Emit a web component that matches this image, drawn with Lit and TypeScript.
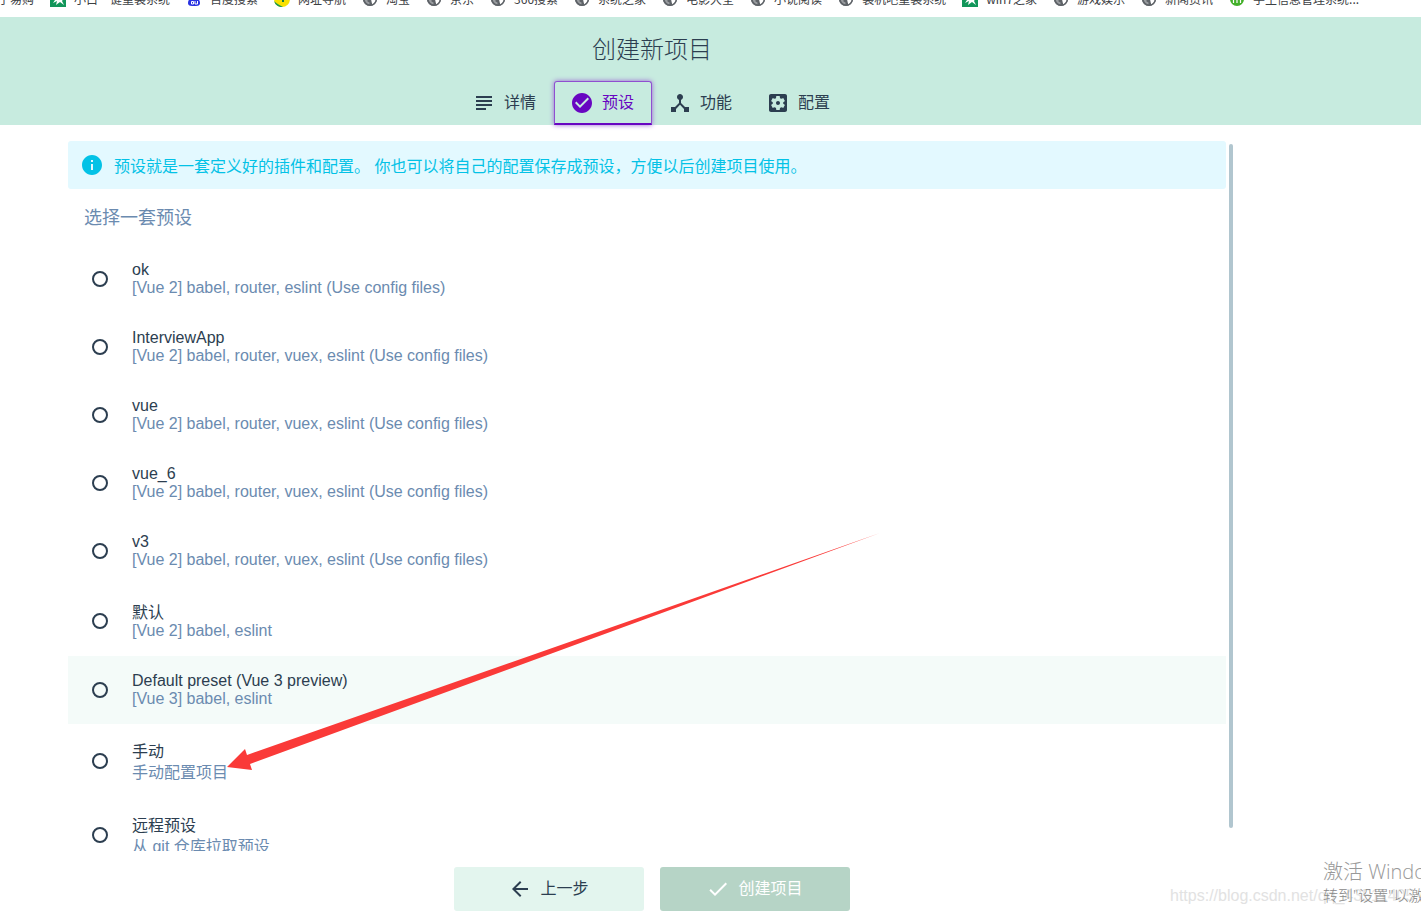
import { LitElement, html, css, svg } from "lit";
import { customElement, state } from "lit/decorators.js";

type Glyph = "win" | "paw" | "nav" | "globe" | "school" | "none";

const bookmarks: { label: string; glyph: Glyph }[] = [
  { label: "苏宁易购", glyph: "none" },
  { label: "小白一键重装系统", glyph: "win" },
  { label: "百度搜索", glyph: "paw" },
  { label: "网址导航", glyph: "nav" },
  { label: "淘宝", glyph: "globe" },
  { label: "京东", glyph: "globe" },
  { label: "360搜索", glyph: "globe" },
  { label: "系统之家", glyph: "globe" },
  { label: "电影大全", glyph: "globe" },
  { label: "小说阅读", glyph: "globe" },
  { label: "装机吧重装系统", glyph: "globe" },
  { label: "win7之家", glyph: "win" },
  { label: "游戏娱乐", glyph: "globe" },
  { label: "新闻资讯", glyph: "globe" },
  { label: "学生信息管理系统...", glyph: "school" },
];

const bookmarkGlyphs = {
  none: svg``,
  win: svg`<rect width="16" height="16" fill="#12965a"/><path d="M3 7h11l-2 3 2 4-4-3-4 3 1-4-4 2 2-3z" fill="#fff"/>`,
  paw: svg`<path d="M8 5c3 0 6 4 6 7s-3 3-6 3-6 0-6-3 3-7 6-7z" fill="#2932e1"/><path d="M5.500 10.500h2v2.500h-2zM9 10v3h2.500v-3" fill="none" stroke="#fff"/>`,
  nav: svg`<circle cx="8" cy="8" r="8" fill="#f8e000"/><path d="M0 10a8 8 0 0 0 9 6c-3-2-6-3-9-6z" fill="#1d9a4a"/><path d="M9 6v5" stroke="#187a3c" stroke-width="2"/>`,
  globe: svg`<circle cx="8" cy="8" r="7" fill="#5f6368"/><path d="M8 3h3c2 1 3 3 3 5 0 3-2 5-4 5.500V12c-1-1 0-2-1-3L7 8c1-1 3-1 2-3z" fill="#fff"/><path d="M2.500 7l3 2v1.500l2 1v2C5 13 2.500 11 2.500 7z" fill="#9a9da0"/><circle cx="8" cy="8" r="6.300" fill="none" stroke="#5f6368" stroke-width="1.400"/>`,
  school: svg`<circle cx="8" cy="8" r="7" fill="#43b02a"/><path d="M4.500 12V7h7v5M8 7v5" fill="none" stroke="#fff" stroke-width="1.200"/>`,
};

const icons = {
  subject: "M4 5h16v2H4zM4 9h16v2H4zM4 13h16v2H4zM4 17h10v2H4z",
  check_circle:
    "M12 2C6.480 2 2 6.480 2 12s4.480 10 10 10 10-4.480 10-10S17.520 2 12 2zm-2 15l-5-5 1.410-1.410L10 14.170l7.590-7.590L19 8l-9 9z",
  hub: "M17 16l-4-4V8.820C14.160 8.400 15 7.300 15 6c0-1.660-1.340-3-3-3S9 4.340 9 6c0 1.300.84 2.400 2 2.820V12l-4 4H3v5h5v-3.050l4-4.200 4 4.200V21h5v-5h-4z",
  settings:
    "M12 10c-1.100 0-2 .9-2 2s.9 2 2 2 2-.9 2-2-.9-2-2-2zm7-7H5c-1.110 0-2 .9-2 2v14c0 1.100.89 2 2 2h14c1.110 0 2-.9 2-2V5c0-1.100-.89-2-2-2zm-1.750 9c0 .23-.02.46-.05.68l1.480 1.160c.13.11.17.3.08.45l-1.400 2.420c-.09.15-.27.21-.43.15l-1.740-.7c-.36.28-.76.51-1.180.69l-.26 1.850c-.03.17-.18.3-.35.3h-2.800c-.17 0-.32-.13-.35-.29l-.26-1.850c-.43-.18-.82-.41-1.180-.69l-1.740.7c-.16.06-.34 0-.43-.15l-1.400-2.420c-.09-.15-.05-.34.08-.45l1.480-1.160c-.03-.23-.05-.46-.05-.69 0-.23.02-.46.05-.68l-1.480-1.160c-.13-.11-.17-.3-.08-.45l1.400-2.420c.09-.15.27-.21.43-.15l1.740.7c.36-.28.76-.51 1.180-.69l.26-1.850c.03-.17.18-.3.35-.3h2.800c.17 0 .32.13.35.29l.26 1.850c.43.18.82.41 1.180.69l1.740-.7c.16-.06.34 0 .43.15l1.400 2.420c.09.15.05.34-.08.45l-1.480 1.160c.03.23.05.46.05.69z",
  info: "M12 2C6.480 2 2 6.480 2 12s4.480 10 10 10 10-4.480 10-10S17.520 2 12 2zm1 15h-2v-6h2v6zm0-8h-2V7h2v2z",
  back: "M20 11H7.830l5.590-5.590L12 4l-8 8 8 8 1.410-1.410L7.830 13H20v-2z",
  done: "M9 16.200L4.800 12l-1.400 1.400L9 19 21 7l-1.400-1.400L9 16.200z",
};

const tabs: { label: string; icon: keyof typeof icons; active?: boolean }[] = [
  { label: "详情", icon: "subject" },
  { label: "预设", icon: "check_circle", active: true },
  { label: "功能", icon: "hub" },
  { label: "配置", icon: "settings" },
];

const presets = [
  { name: "ok", info: "[Vue 2] babel, router, eslint (Use config files)" },
  { name: "InterviewApp", info: "[Vue 2] babel, router, vuex, eslint (Use config files)" },
  { name: "vue", info: "[Vue 2] babel, router, vuex, eslint (Use config files)" },
  { name: "vue_6", info: "[Vue 2] babel, router, vuex, eslint (Use config files)" },
  { name: "v3", info: "[Vue 2] babel, router, vuex, eslint (Use config files)" },
  { name: "默认", info: "[Vue 2] babel, eslint" },
  { name: "Default preset (Vue 3 preview)", info: "[Vue 3] babel, eslint", hover: true },
  { name: "手动", info: "手动配置项目" },
  { name: "远程预设", info: "从 git 仓库拉取预设" },
];

const cjk = /[\u4e00-\u9fff]/;
const icon = (name: keyof typeof icons) =>
  html`<svg class="icon" viewBox="0 0 24 24" aria-hidden="true"><path d=${icons[name]} /></svg>`;

@customElement("app-root")
export class AppRoot extends LitElement {
  @state() private selected = "";

  static styles = css`
    :host {
      display: flex;
      flex-direction: column;
      position: relative;
      height: 100vh;
      overflow: hidden;
      background: #fff;
      color: #2c3e50;
      font: 16px/18px "Liberation Sans", "Noto Sans CJK SC", sans-serif;
    }
    * { box-sizing: border-box; }
    button { font: inherit; border: 0; cursor: pointer; }
    .icon { width: 24px; height: 24px; fill: currentColor; flex: none; }
    .bookmarks { flex: none; height: 17px; overflow: hidden; }
    .bookmark-row { display: flex; gap: 16px; margin: -9px 0 0 -14px; }
    .bookmark {
      display: flex;
      gap: 8px;
      flex: none;
      color: #3c4043;
      font: 12px/16px "Noto Sans CJK SC", sans-serif;
      text-decoration: none;
      white-space: nowrap;
    }
    .bookmark svg { width: 16px; height: 16px; }
    .header {
      flex: none;
      display: flex;
      flex-direction: column;
      align-items: center;
      gap: 13px;
      padding: 15px 117px 0 0;
      background: #c7ebdf;
    }
    .title { margin: 0; font-size: 24px; line-height: 36px; font-weight: 300; }
    .tabs { display: flex; }
    .tab {
      display: flex;
      align-items: center;
      gap: 8px;
      height: 44px;
      padding: 0 18px 0 16px;
      background: none;
      color: #2c3e50;
      border-radius: 3px;
    }
    .tab.active {
      color: #6806c1;
      border: 1px solid #8f4fd0;
      border-bottom: 2px solid #6806c1;
      padding: 1px 17px 0 15px;
      border-radius: 3px 3px 0 0;
      box-shadow: 0 0 5px #9a62d4;
    }
    .content {
      flex: 1;
      min-height: 0;
      display: flex;
      gap: 3px;
      margin: 16px 188px 0 68px;
    }
    .list { flex: 1; min-width: 0; overflow: hidden; }
    .banner {
      display: flex;
      align-items: center;
      gap: 10px;
      height: 48px;
      padding: 0 12px;
      border-radius: 3px;
      background: #e3f9ff;
      color: #03c2e6;
    }
    .banner-text { padding-top: 3px; }
    .group {
      margin: 0;
      padding: 16px 16px 14px;
      color: #6b8bb0;
      font-size: 18px;
      line-height: 26px;
      font-weight: 400;
    }
    .presets { margin: 0; padding: 0; border: 0; }
    .preset { display: flex; align-items: center; gap: 24px; padding: 16px 24px; cursor: pointer; }
    .preset.hover { background: #f4fbf9; }
    .radio {
      appearance: none;
      width: 16px;
      height: 16px;
      margin: 0;
      border: 2px solid #2c3e50;
      border-radius: 50%;
    }
    .radio:checked { background: radial-gradient(#2c3e50 40%, transparent 45%); }
    .texts { display: flex; flex-direction: column; }
    .text { line-height: 18px; }
    .text.tall { padding-top: 2px; line-height: 19px; }
    .info { color: #6b8bb0; }
    .thumb { flex: none; width: 4px; margin: 3px 0 23px; border-radius: 2px; background: #b1c6cf; }
    .actions {
      flex: none;
      display: flex;
      justify-content: center;
      gap: 16px;
      padding: 16px 118px 3px 0;
    }
    .action {
      display: flex;
      align-items: center;
      justify-content: center;
      gap: 8px;
      width: 190px;
      height: 44px;
      border-radius: 3px;
      background: #e3f5ee;
      color: #2c3e50;
    }
    .action.primary { background: #b6d4c6; color: #fff; }
    .arrow { position: absolute; left: 0; top: 0; width: 1421px; height: 914px; pointer-events: none; }
    .activate {
      position: absolute;
      left: 1323px;
      bottom: 8px;
      color: #a8a8a8;
      font-family: "Open Sans", "Noto Sans CJK SC", sans-serif;
      white-space: nowrap;
      pointer-events: none;
    }
    .activate-title { font-size: 20px; line-height: 24px; font-weight: 300; color: #999; }
    .activate-text { font-size: 15px; line-height: 22px; font-weight: 300; color: #888; }
    .watermark {
      position: absolute;
      left: 1170px;
      bottom: 9px;
      color: #e2e2e2;
      white-space: nowrap;
      pointer-events: none;
    }
  `;

  render() {
    return html`
      <nav class="bookmarks">
        <div class="bookmark-row">
          ${bookmarks.map(
            (b) => html`<a class="bookmark" href="#">
              ${b.glyph === "none" ? "" : html`<svg viewBox="0 0 16 16" aria-hidden="true">${bookmarkGlyphs[b.glyph]}</svg>`}
              <span>${b.label}</span>
            </a>`
          )}
        </div>
      </nav>
      <header class="header">
        <h1 class="title">创建新项目</h1>
        <div class="tabs">
          ${tabs.map(
            (t) => html`<button class="tab ${t.active ? "active" : ""}">${icon(t.icon)}<span>${t.label}</span></button>`
          )}
        </div>
      </header>
      <main class="content">
        <div class="list">
          <div class="banner">
            ${icon("info")}
            <span class="banner-text">预设就是一套定义好的插件和配置。 你也可以将自己的配置保存成预设，方便以后创建项目使用。</span>
          </div>
          <h2 class="group" id="group">选择一套预设</h2>
          <fieldset class="presets" aria-labelledby="group">
            ${presets.map(
              (p) => html`<label class="preset ${p.hover ? "hover" : ""}">
                <input class="radio" type="radio" name="preset" .checked=${this.selected === p.name}
                  @change=${() => (this.selected = p.name)} />
                <span class="texts">
                  <span class="text ${cjk.test(p.name) ? "tall" : ""}">${p.name}</span>
                  <span class="text info ${cjk.test(p.info) ? "tall" : ""}">${p.info}</span>
                </span>
              </label>`
            )}
          </fieldset>
        </div>
        <div class="thumb"></div>
      </main>
      <footer class="actions">
        <button class="action">${icon("back")}<span>上一步</span></button>
        <button class="action primary" disabled>${icon("done")}<span>创建项目</span></button>
      </footer>
      <svg class="arrow" viewBox="0 0 1421 914" aria-hidden="true">
        <path d="M880 533L247 755L245 749L227 767L252 770L250 764Z" fill="#fa3a38" />
      </svg>
      <div class="watermark">https://blog.csdn.net/qq_43511405</div>
      <div class="activate">
        <div class="activate-title">激活 Windows</div>
        <div class="activate-text">转到"设置"以激活 Windows。</div>
      </div>
    `;
  }
}
